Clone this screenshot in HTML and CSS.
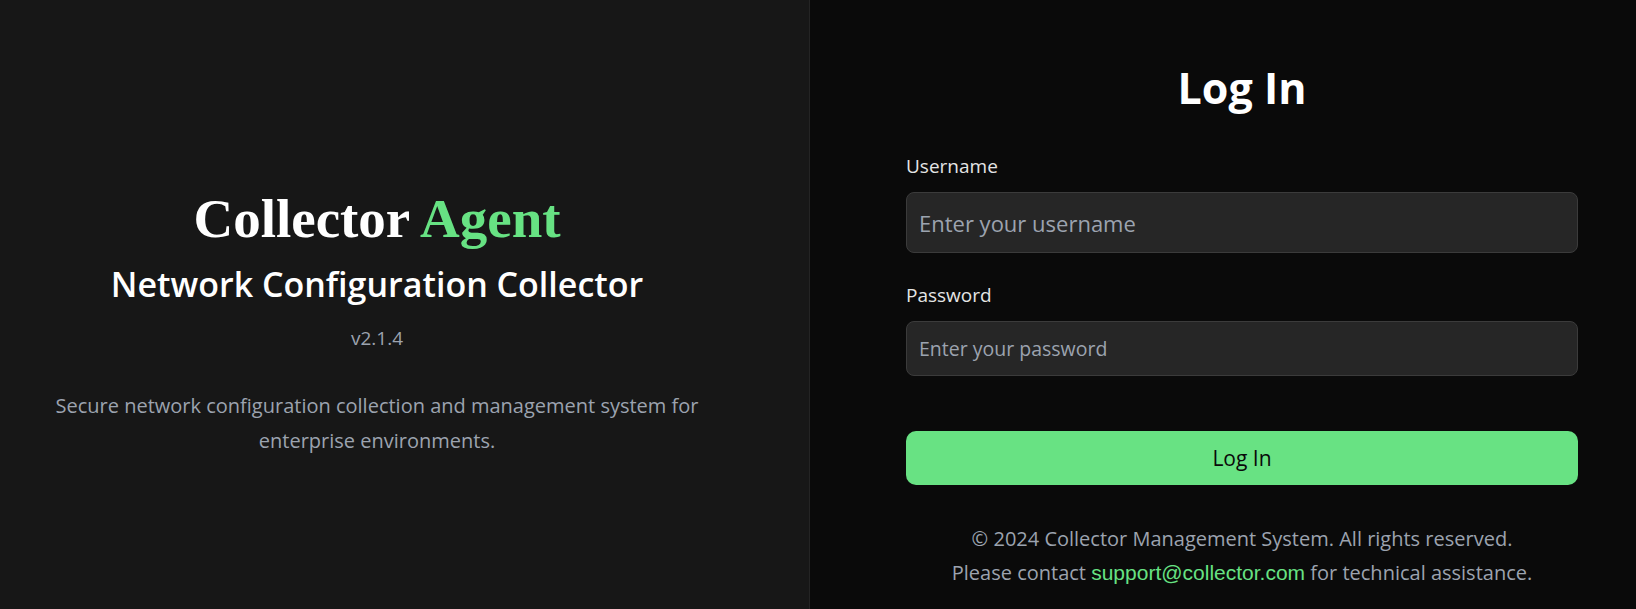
FILE: index.html
```html
<!DOCTYPE html>
<html lang="en">
<head>
<meta charset="utf-8">
<title>Log In - Collector Agent</title>
<link rel="stylesheet" href="styles.css">
</head>
<body>
<div class="page">
  <section class="brand">
    <h1 class="brand-title">Collector <span class="accent">Agent</span></h1>
    <h2 class="brand-subtitle">Network Configuration Collector</h2>
    <p class="brand-version">v2.1.4</p>
    <p class="brand-desc">Secure network configuration collection and management system for enterprise environments.</p>
  </section>
  <section class="auth">
    <div class="auth-inner">
      <h2 class="auth-title">Log In</h2>
      <form class="auth-form">
        <label class="field-label" for="username">Username</label>
        <input class="field-input field-input--lg" id="username" type="text" placeholder="Enter your username">
        <label class="field-label field-label--second" for="password">Password</label>
        <input class="field-input" id="password" type="password" placeholder="Enter your password">
        <button class="submit-btn" type="button">Log In</button>
      </form>
      <div class="auth-footer">
        <p class="footer-line">© 2024 Collector Management System. All rights reserved.</p>
        <p class="footer-line">Please contact <a class="footer-link" href="#">support@collector.com</a> for technical assistance.</p>
      </div>
    </div>
  </section>
</div>
</body>
</html>
```

FILE: styles.css
```css
* { box-sizing: border-box; }
html, body { margin: 0; padding: 0; }
body {
  background: #0a0a0a;
  font-family: "Open Sans", "Noto Sans", sans-serif;
  color: #ffffff;
}
.page {
  display: flex;
  height: 609px;
}
.brand {
  width: 810px;
  flex: none;
  background: #171717;
  border-right: 1px solid #242424;
  padding: 189px 102px 0 47px;
  text-align: center;
}
.brand-title {
  margin: 0;
  font-family: "Liberation Serif", "DejaVu Serif", serif;
  font-size: 55px;
  line-height: 60px;
  font-weight: 700;
  color: #ffffff;
}
.accent { color: #67e283; }
.brand-subtitle {
  margin: 15px 0 0;
  font-size: 34px;
  line-height: 40px;
  font-weight: 600;
  color: #ffffff;
}
.brand-version {
  margin: 22px 0 0;
  font-size: 19px;
  line-height: 24px;
  color: #9ca3af;
}
.brand-desc {
  margin: 38px 0 0;
  font-size: 20px;
  line-height: 35px;
  color: #9ca3af;
}
.auth {
  flex: 1;
  padding: 60px 0 0 96px;
}
.auth-inner {
  width: 672px;
}
.auth-title {
  margin: 0;
  text-align: center;
  font-size: 43px;
  line-height: 56px;
  font-weight: 700;
  color: #ffffff;
}
.auth-form {
  display: flex;
  flex-direction: column;
  margin-top: 38px;
}
.field-label {
  font-size: 19px;
  line-height: 24px;
  color: #e5e5e5;
}
.field-label--second { margin-top: 30px; }
.field-input {
  margin-top: 14px;
  height: 55px;
  padding: 0 12px;
  background: #262626;
  border: 1px solid #3b3b3b;
  border-radius: 8px;
  font-family: "Open Sans", "Noto Sans", sans-serif;
  font-size: 19.5px;
  color: #e5e5e5;
  outline: none;
}
.field-input--lg {
  height: 61px;
  font-size: 22px;
}
.field-input::placeholder { color: #9ca3af; opacity: 1; }
.submit-btn {
  margin-top: 55px;
  height: 54px;
  border: none;
  border-radius: 10px;
  background: #68e283;
  color: #0a0a0a;
  font-family: "Open Sans", "Noto Sans", sans-serif;
  font-size: 21px;
  font-weight: 500;
  cursor: pointer;
}
.auth-footer {
  margin-top: 37px;
  text-align: center;
}
.footer-line {
  margin: 0;
  font-size: 20px;
  line-height: 34px;
  color: #9ca3af;
}
.footer-link {
  font-family: "Liberation Sans", Arial, sans-serif;
  font-size: 21px;
  color: #67e283;
  text-decoration: none;
}
```
